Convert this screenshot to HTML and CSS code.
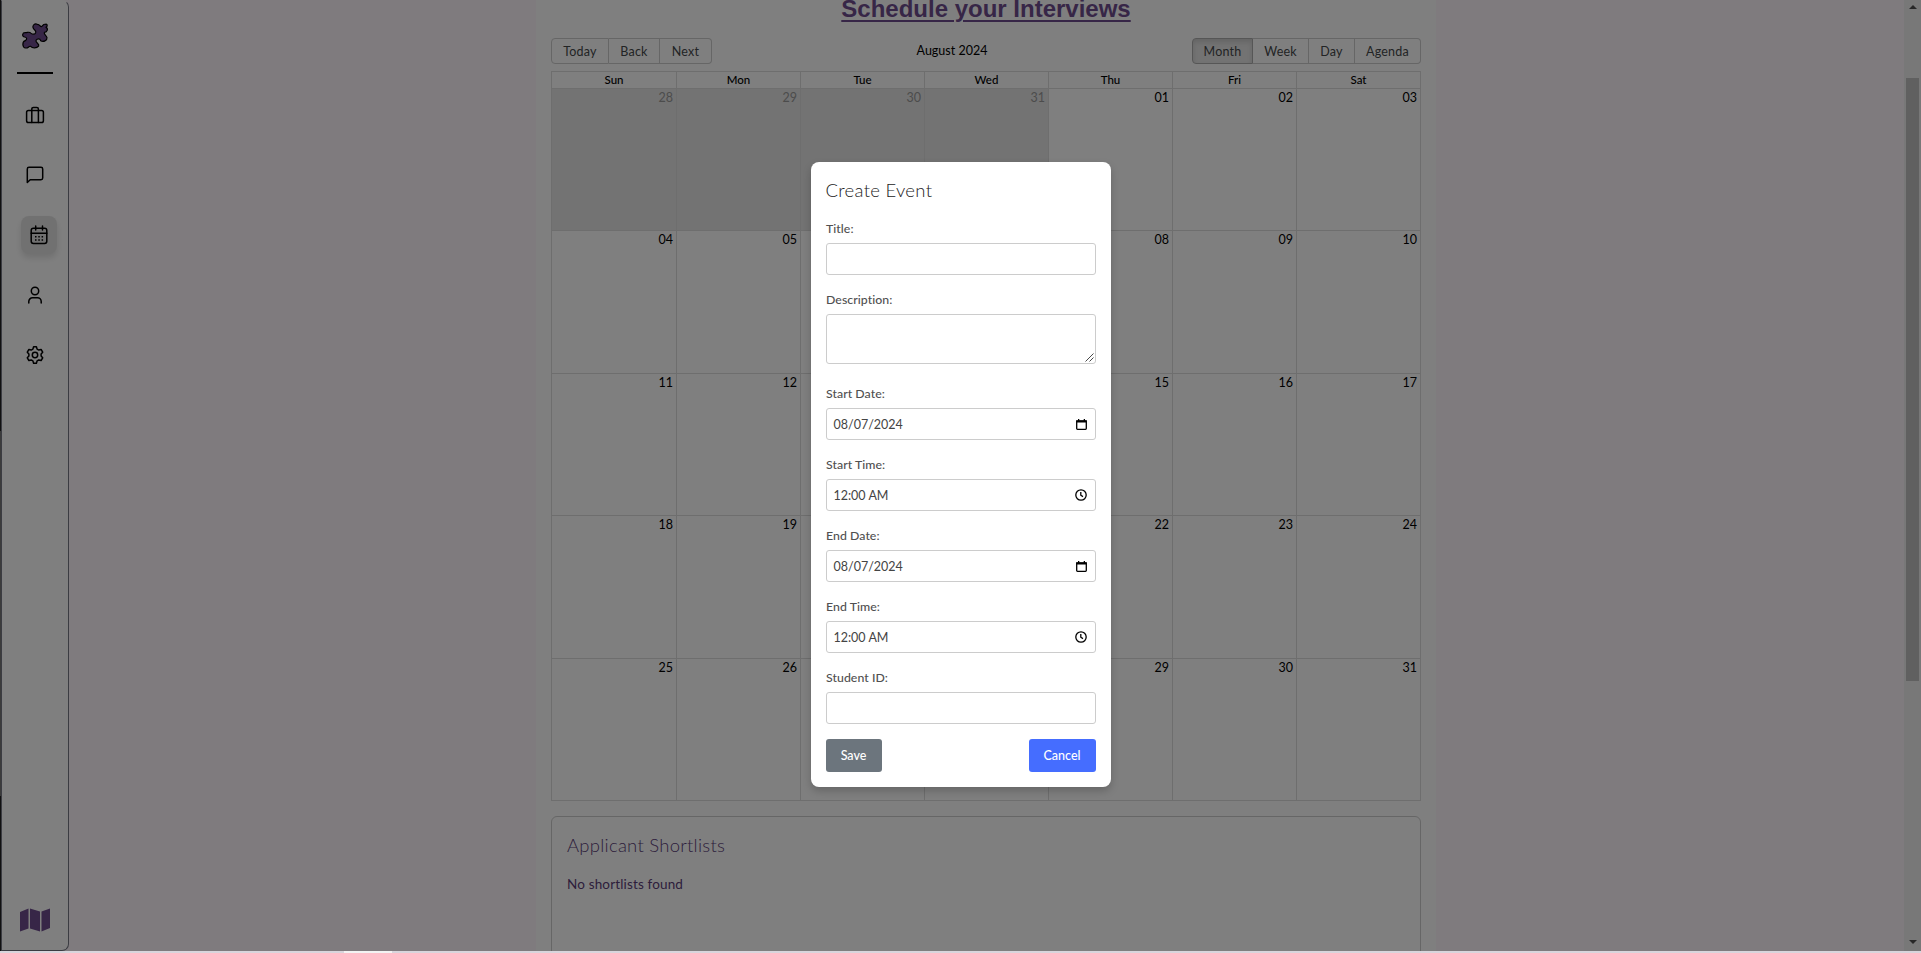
FILE: index.html
```
<!DOCTYPE html>
<html lang="en">
<head>
<meta charset="utf-8">
<title>Schedule your Interviews</title>
<link rel="stylesheet" href="styles.css">
</head>
<body>
<div class="app">
  <nav class="sidebar">
    <svg class="logo" viewBox="60 65 90 84"><path d="M77 97C66 96 65 109 74 110C81 111 82 117 76 121C66 124 66 141 77 143C86 144 86 136 92 138C97 144 110 144 116 137C119 130 106 128 108 120C112 114 120 114 122 121C130 126 142 121 141 112C139 104 131 103 133 96C143 96 145 84 138 81C144 77 142 70 136 72C129 70 129 78 124 79C119 79 120 72 112 72C104 68 97 75 99 82C101 90 110 89 107 97C104 104 95 102 92 98C88 93 82 97 77 97Z" fill="#6f4d8f" stroke="#000" stroke-width="3.6" stroke-linejoin="round"/></svg>
    <span class="divider"></span>
    <a class="item"><svg class="icon" viewBox="0 0 24 24"><rect x="3.6" y="7.4" width="16.8" height="12.2" rx="1.8"/><path d="M8.8 19.5V6a1.6 1.6 0 0 1 1.6-1.6h3.4A1.6 1.6 0 0 1 15.400 6v13.500"/></svg></a>
    <a class="item"><svg class="icon" viewBox="0 0 24 24"><path d="M4.300 19.500V6a1.700 1.700 0 0 1 1.700-1.700h12A1.700 1.700 0 0 1 19.700 6v9a1.700 1.700 0 0 1-1.700 1.700H7.200z"/></svg></a>
    <a class="item active"><svg class="icon" viewBox="0 0 24 24"><rect x="4.200" y="5.200" width="15.600" height="15.300" rx="2.200"/><path d="M4.200 10.200h15.600M8.700 3v4M15.500 3v4"/><path class="dots" d="M8 13.700h1.500M11.300 13.700h1.500M14.600 13.700h1.500M8 17h1.500M11.300 17h1.500M14.600 17h1.500"/></svg></a>
    <a class="item"><svg class="icon" viewBox="0 0 24 24"><circle cx="12" cy="8" r="3.700"/><path d="M5.800 20v-1.500a3.700 3.700 0 0 1 3.700-3.700h5a3.700 3.700 0 0 1 3.700 3.700V20"/></svg></a>
    <a class="item"><svg class="icon" viewBox="0 0 24 24"><circle cx="12" cy="12" r="2.700"/><path d="M10.600 3.800h2.800l.7 2.300 1.700 1 2.300-.6 1.600 2.700-1.600 1.700v2.200l1.600 1.700-1.600 2.700-2.300-.6-1.700 1-.7 2.300h-2.800l-.7-2.300-1.700-1-2.300.6-1.600-2.700 1.600-1.700v-2.200L4.300 9.200l1.600-2.700 2.300.6 1.700-1z"/></svg></a>
    <svg class="map" viewBox="0 0 30 24"><path d="M0 4l8.500-3.500v20L0 23.500zM10 .5l10 3v20l-10-3zM21.500 3.500L30 .5v19.500l-8.500 3.500z"/></svg>
  </nav>
  <main class="stage">
    <section class="page">
      <h1>Schedule your Interviews</h1>
      <div class="toolbar">
        <div class="group"><button>Today</button><button>Back</button><button>Next</button></div>
        <span class="month">August 2024</span>
        <div class="group views"><button class="on">Month</button><button>Week</button><button>Day</button><button>Agenda</button></div>
      </div>
      <div class="calendar">
        <div class="week head"><b>Sun</b><b>Mon</b><b>Tue</b><b>Wed</b><b>Thu</b><b>Fri</b><b>Sat</b></div>
        <div class="week"><i class="off">28</i><i class="off">29</i><i class="off">30</i><i class="off">31</i><i>01</i><i>02</i><i>03</i></div>
        <div class="week"><i>04</i><i>05</i><i>06</i><i>07</i><i>08</i><i>09</i><i>10</i></div>
        <div class="week"><i>11</i><i>12</i><i>13</i><i>14</i><i>15</i><i>16</i><i>17</i></div>
        <div class="week"><i>18</i><i>19</i><i>20</i><i>21</i><i>22</i><i>23</i><i>24</i></div>
        <div class="week"><i>25</i><i>26</i><i>27</i><i>28</i><i>29</i><i>30</i><i>31</i></div>
      </div>
      <div class="shortlists"><h2>Applicant Shortlists</h2><p>No shortlists found</p></div>
    </section>
  </main>
  <div class="scrollbar"><span class="up"></span><span class="thumb"></span><span class="down"></span></div>
</div>
<div class="overlay">
  <form class="modal">
    <h2>Create Event</h2>
    <label>Title:</label><div class="field"></div>
    <label>Description:</label><div class="field area"><svg class="grip" viewBox="0 0 9 9"><path d="M.5 8.500l8-8M4.500 8.500l4-4"/></svg></div>
    <label>Start Date:</label><div class="field"><span>08/07/2024</span><svg class="cal" viewBox="0 0 11 11"><path d="M.7 2h9.600v7.500a.8.800 0 0 1-.8.800h-8a.8.800 0 0 1-.8-.8z"/><path class="solid" d="M.7 1.400h9.600v2.200H.7zM2 0h1.300v1.400H2zM7.700 0H9v1.400H7.700z"/></svg></div>
    <label>Start Time:</label><div class="field"><span>12:00 AM</span><svg class="clock" viewBox="0 0 12 12"><circle cx="6" cy="6" r="5.200"/><path d="M5.800 3v3.200L8 7.600"/></svg></div>
    <label>End Date:</label><div class="field"><span>08/07/2024</span><svg class="cal" viewBox="0 0 11 11"><path d="M.7 2h9.600v7.500a.8.800 0 0 1-.8.800h-8a.8.800 0 0 1-.8-.8z"/><path class="solid" d="M.7 1.400h9.600v2.200H.7zM2 0h1.300v1.400H2zM7.700 0H9v1.400H7.700z"/></svg></div>
    <label>End Time:</label><div class="field"><span>12:00 AM</span><svg class="clock" viewBox="0 0 12 12"><circle cx="6" cy="6" r="5.200"/><path d="M5.800 3v3.200L8 7.600"/></svg></div>
    <label>Student ID:</label><div class="field"></div>
    <div class="actions"><button type="button" class="save">Save</button><button type="button" class="cancel">Cancel</button></div>
  </form>
</div>
<div class="edge"><span></span></div>
</body>
</html>
```
FILE: styles.css
```
* { box-sizing: border-box; }
body { margin: 0; height: 953px; overflow: hidden; font-family: Lato, "Open Sans", sans-serif; font-size: 13px; color: #000; }
button { font: inherit; margin: 0; }
.app { display: flex; height: 951px; overflow: hidden; background: #fff6fd; border-left: 1px solid #000; border-image: linear-gradient(#222 0 431px, #777 431px 795px, #222 795px) 1; border-width: 0 0 0 1px; }
.sidebar { width: 68px; flex: none; height: 951px; background: #fff; border: 1px solid #777985; border-top-color: #fff; border-radius: 0 7px 7px 0; display: flex; flex-direction: column; align-items: center; padding-top: 21px; }
.logo { width: 30px; height: 28px; flex: none; }
.divider { width: 36px; height: 2px; background: #000; margin: 22px 0 22px; flex: none; }
.item { width: 36px; height: 38px; margin-bottom: 22px; display: flex; align-items: center; justify-content: center; border-radius: 8px; flex: none; }
.active { background: #e3e3e3; box-shadow: 0 4px 6px rgba(0,0,0,.12); margin-left: 8px; }
.icon { width: 24px; height: 24px; fill: none; stroke: #000; stroke-width: 1.5; stroke-linejoin: round; stroke-linecap: round; }
.dots { stroke-linecap: butt; stroke-width: 1.4; }
.map { width: 30px; height: 24px; margin: auto 0 18px; fill: #6f4d8f; flex: none; }
.stage { flex: 1; display: flex; padding-left: 467px; }
.page { width: 900px; height: 951px; background: #fff; padding: 0 15px; display: flex; flex-direction: column; }
.page > * { flex: none; }
h1 { margin: -5px 0 0; height: 43px; text-align: center; font: bold 24px/27px "Liberation Sans", Arial, sans-serif; color: #6f4d8f; text-decoration: underline; text-decoration-thickness: 2px; text-underline-offset: 3px; }
.toolbar { display: grid; grid-template-columns: 161px 1fr 229px; height: 25px; align-items: stretch; margin-bottom: 8px; }
.group { display: grid; grid-template-columns: 58px 51px 52px; }
.views { grid-template-columns: 61px 56px 46px 66px; }
.group button { border: 1px solid #ccc; border-left-width: 0; background: #fff; color: #45484a; padding: 0; line-height: 23px; font-size: 12.500px; letter-spacing: .2px; }
.group button:first-child { border-left-width: 1px; border-radius: 4px 0 0 4px; }
.group button:last-child { border-radius: 0 4px 4px 0; }
.group .on { background: #e6e6e6; border-color: #adadad; box-shadow: inset 0 3px 5px rgba(0,0,0,.125); }
.month { text-align: center; line-height: 26px; font-size: 12.500px; letter-spacing: 0; }
.calendar { border: 1px solid #ddd; height: 730px; display: grid; grid-template-rows: 16px repeat(5, 1fr); }
.week { display: grid; grid-template-columns: repeat(7, 1fr); border-top: 1px solid #ddd; }
.week.head { border-top: 0; }
.week > * { border-left: 1px solid #ddd; }
.week > *:first-child { border-left: 0; }
.week b { text-align: center; font-size: 11.5px; line-height: 16px; font-weight: 500; }
.week i { font-style: normal; text-align: right; padding-right: 3px; line-height: 18px; font-size: 12.500px; letter-spacing: 0; }
.week .off { background: #e6e6e6; color: #999; }
.shortlists { margin-top: 15px; height: 150px; border: 1px solid #ccc; border-radius: 6px; padding: 16px 15px; color: #5b3d78; }
.shortlists h2 { margin: 0; font-weight: 300; font-size: 18.500px; line-height: 24px; letter-spacing: .25px; }
.shortlists p { margin: 17px 0 0; font-size: 13.500px; line-height: 20px; letter-spacing: .15px; }
.scrollbar { width: 17px; flex: none; background: #f1f1f1; display: flex; flex-direction: column; align-items: center; padding: 5px 0 7px; }
.up { border: 4px solid transparent; border-top: 0; border-bottom-color: #505050; }
.down { border: 4px solid transparent; border-bottom: 0; border-top-color: #505050; }
.thumb { width: 13px; height: 603px; margin: 69px 0 auto; background: #c1c1c1; }
.overlay { position: absolute; inset: 0 0 2px 0; background: rgba(0,0,0,.5); display: flex; justify-content: center; align-items: flex-start; padding-top: 162px; }
.modal { width: 300px; height: 625px; background: #fff; border-radius: 8px; box-shadow: 0 4px 8px rgba(0,0,0,.2); padding: 15px; display: flex; flex-direction: column; color: #333; }
.modal h2 { margin: 0 0 18px; font-size: 18.500px; font-weight: 300; line-height: 26px; letter-spacing: .3px; color: #222; }
.modal label { line-height: 16px; margin-bottom: 6px; padding-left: .500px; font-size: 12.300px; font-weight: 500; color: #505050; letter-spacing: .05px; }
.field { height: 32px; flex: none; border: 1px solid #ccc; border-radius: 3px; margin-bottom: 17px; padding: 0 8px 0 7px; display: flex; align-items: center; justify-content: space-between; font-size: 12.500px; letter-spacing: 0; color: #444; }
.area { height: 50px; margin-bottom: 22px; align-items: flex-end; justify-content: flex-end; padding: 0 1px 1px; }
.grip { width: 9px; height: 9px; fill: none; stroke: #333; stroke-width: .9; }
.cal { width: 11px; height: 11px; fill: none; stroke: #000; stroke-width: 1.300; }
.solid { fill: #000; stroke: none; }
.clock { width: 12px; height: 12px; fill: none; stroke: #000; stroke-width: 1.300; }
.actions { display: flex; justify-content: space-between; margin-top: -2px; }
.actions button { height: 33px; border: 0; border-radius: 3px; color: #fff; font-size: 12.500px; font-weight: 500; padding: 0; }
.save { width: 56px; background: #6c757d; }
.cancel { width: 67px; background: #456dff; }
.edge { height: 2px; background: #d8d5dc; padding-left: 344px; }
.edge span { display: block; width: 48px; height: 2px; background: #f3f3f3; }
```
